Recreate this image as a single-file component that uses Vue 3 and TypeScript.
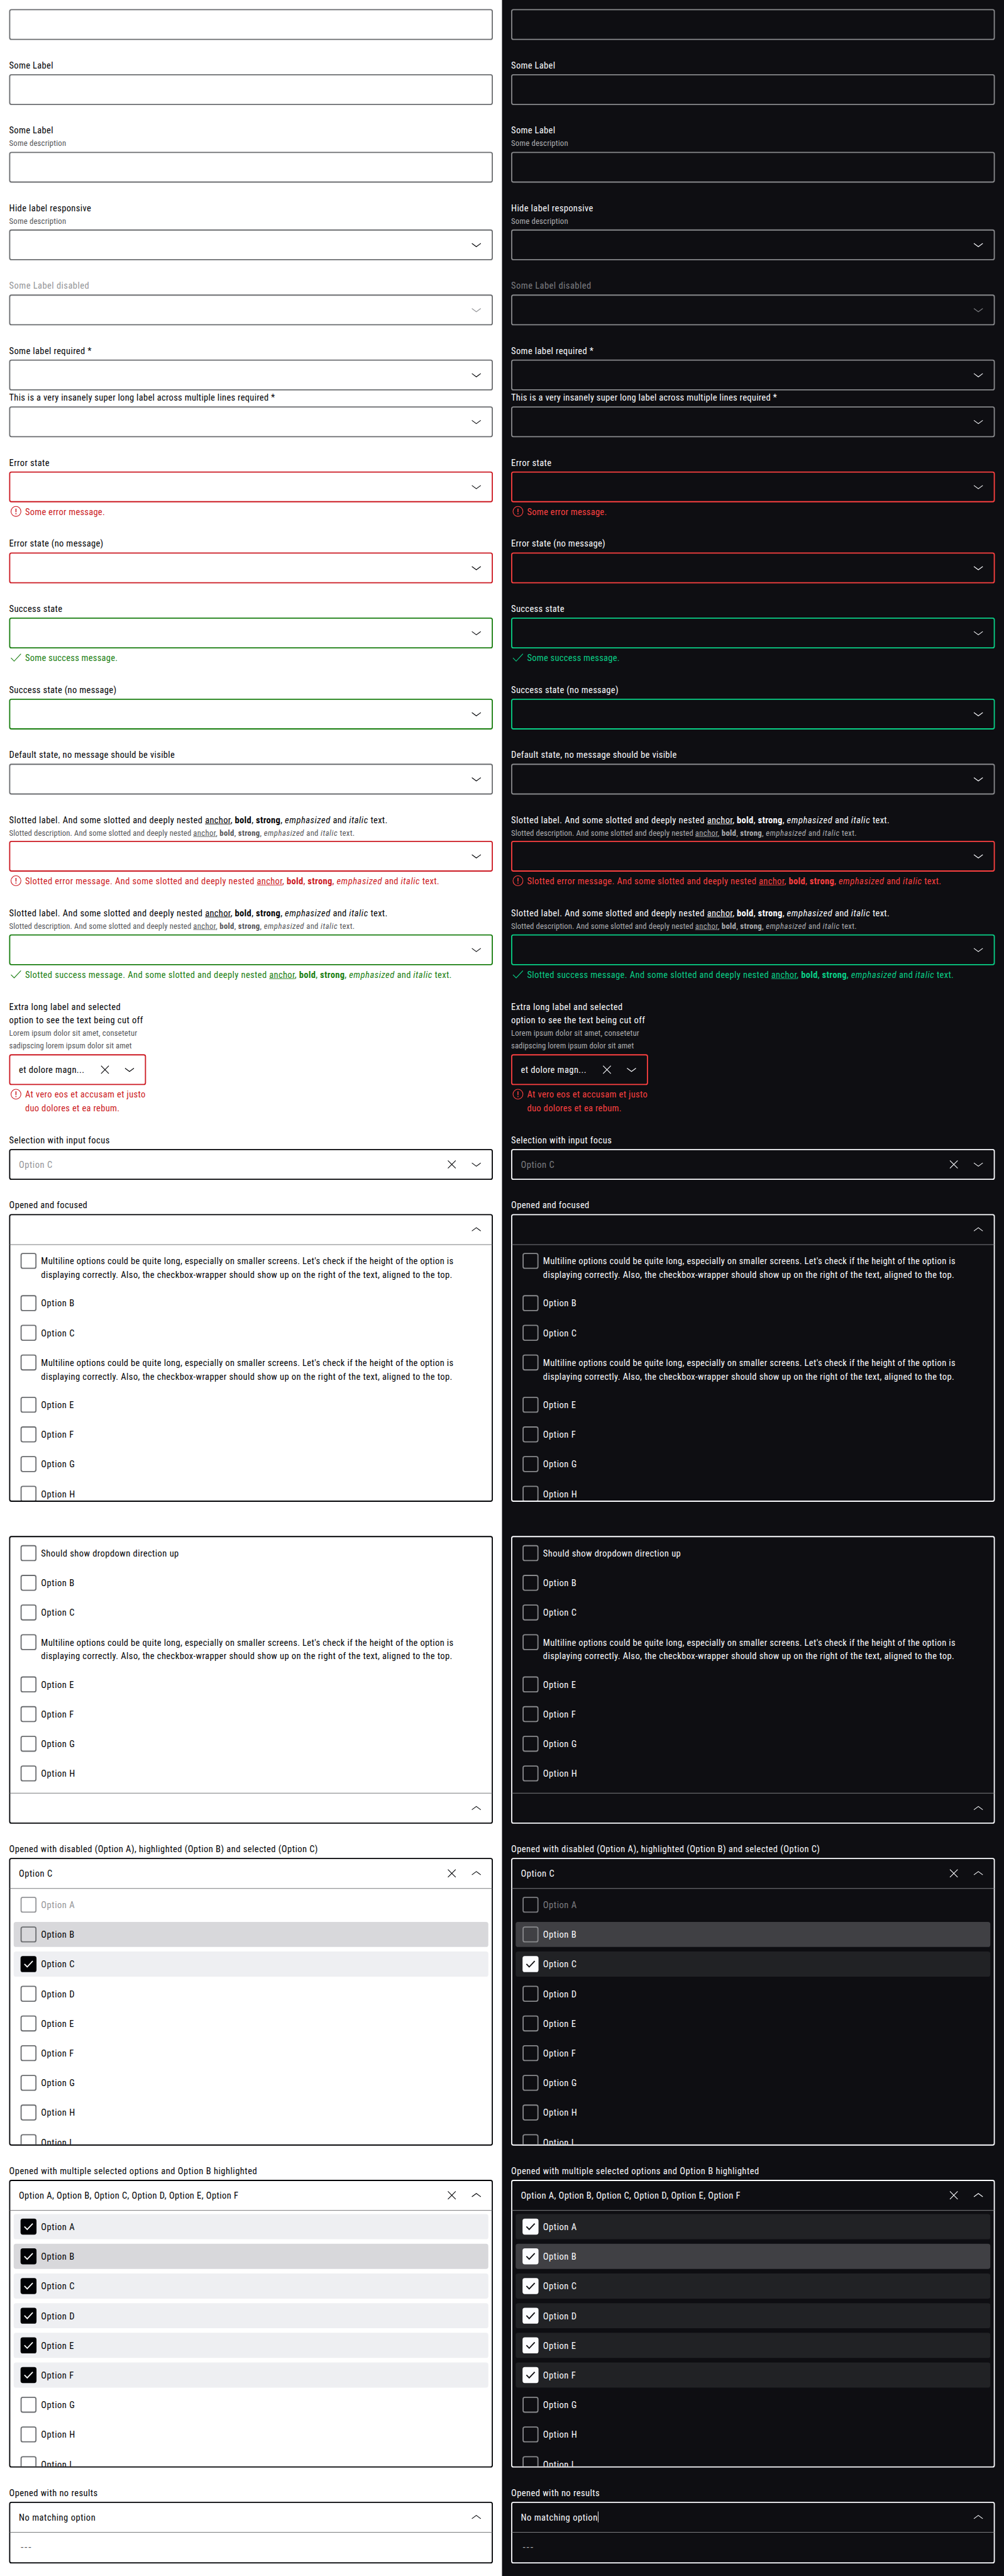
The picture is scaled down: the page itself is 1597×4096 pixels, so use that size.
<script setup lang="ts">
interface Copy {
  text: string
  track: number
  rich?: boolean
}
interface Option {
  lines: Copy[]
  checked?: boolean
  active?: boolean
  disabled?: boolean
}
interface Field {
  label?: Copy[]
  description?: Copy[]
  message?: Copy[]
  state?: 'error' | 'success'
  disabled?: boolean
  focused?: boolean
  toggle?: 'down' | 'up'
  clear?: boolean
  value?: Copy
  placeholder?: boolean
  caret?: boolean
  options?: Option[]
  empty?: boolean
  direction?: 'up'
  narrow?: boolean
  tight?: boolean
  unlabelled?: boolean
}

const c = (text: string, track = 0.42, rich = false): Copy => ({ text, track, rich })

const opt = (letter: string, extra: Partial<Option> = {}): Option => ({
  lines: [c('Option ' + letter, 0.6)],
  ...extra,
})
const multiline = (): Option => ({
  lines: [
    c("Multiline options could be quite long, especially on smaller screens. Let's check if the height of the option is", 0.402),
    c('displaying correctly. Also, the checkbox-wrapper should show up on the right of the text, aligned to the top.', 0.465),
  ],
})
const description = () => [c('Some description', 0.22)]
const slottedLabel = () => [c('Slotted label. And some slotted and deeply nested ', 0.473, true)]
const slottedDescription = () => [c('Slotted description. And some slotted and deeply nested ', 0.135, true)]

const fields: Field[] = [
  {},
  { label: [c('Some Label', 0.36)] },
  { label: [c('Some Label', 0.36)], description: description() },
  { label: [c('Hide label responsive')], description: description(), toggle: 'down' },
  { label: [c('Some Label disabled', 0.5)], toggle: 'down', disabled: true },
  { label: [c('Some label required *')], toggle: 'down' },
  {
    label: [c('This is a very insanely super long label across multiple lines required *', 0.325)],
    toggle: 'down',
    tight: true,
  },
  { label: [c('Error state', 0.46)], toggle: 'down', state: 'error', message: [c('Some error message.', 0.285)] },
  { label: [c('Error state (no message)', 0.37)], toggle: 'down', state: 'error' },
  { label: [c('Success state', 0.39)], toggle: 'down', state: 'success', message: [c('Some success message.', 0.285)] },
  { label: [c('Success state (no message)', 0.36)], toggle: 'down', state: 'success' },
  { label: [c('Default state, no message should be visible', 0.388)], toggle: 'down' },
  {
    label: slottedLabel(),
    description: slottedDescription(),
    toggle: 'down',
    state: 'error',
    message: [c('Slotted error message. And some slotted and deeply nested ', 0.447, true)],
  },
  {
    label: slottedLabel(),
    description: slottedDescription(),
    toggle: 'down',
    state: 'success',
    message: [c('Slotted success message. And some slotted and deeply nested ', 0.43, true)],
  },
  {
    label: [c('Extra long label and selected', 0.5), c('option to see the text being cut off', 0.49)],
    description: [c('Lorem ipsum dolor sit amet, consetetur', 0.205), c('sadipscing lorem ipsum dolor sit amet', 0.1)],
    value: c('et dolore magn...', 0.46),
    toggle: 'down',
    clear: true,
    state: 'error',
    narrow: true,
    message: [c('At vero eos et accusam et justo', 0.415), c('duo dolores et ea rebum.', 0.369)],
  },
  {
    label: [c('Selection with input focus', 0.51)],
    value: c('Option C', 0.63),
    placeholder: true,
    toggle: 'down',
    clear: true,
    focused: true,
  },
  {
    label: [c('Opened and focused')],
    toggle: 'up',
    focused: true,
    options: [multiline(), opt('B'), opt('C'), multiline(), opt('E'), opt('F'), opt('G'), opt('H')],
  },
  {
    toggle: 'up',
    focused: true,
    direction: 'up',
    unlabelled: true,
    options: [
      { lines: [c('Should show dropdown direction up', 0.5)] },
      opt('B'),
      opt('C'),
      multiline(),
      opt('E'),
      opt('F'),
      opt('G'),
      opt('H'),
    ],
  },
  {
    label: [c('Opened with disabled (Option A), highlighted (Option B) and selected (Option C)', 0.51)],
    value: c('Option C', 0.63),
    toggle: 'up',
    clear: true,
    focused: true,
    options: [
      opt('A', { disabled: true }),
      opt('B', { active: true }),
      opt('C', { checked: true }),
      ...['D', 'E', 'F', 'G', 'H', 'I'].map((l) => opt(l)),
    ],
  },
  {
    label: [c('Opened with multiple selected options and Option B highlighted', 0.566)],
    value: c('Option A, Option B, Option C, Option D, Option E, Option F', 0.48),
    toggle: 'up',
    clear: true,
    focused: true,
    options: [
      opt('A', { checked: true }),
      opt('B', { checked: true, active: true }),
      ...['C', 'D', 'E', 'F'].map((l) => opt(l, { checked: true })),
      ...['G', 'H', 'I'].map((l) => opt(l)),
    ],
  },
  {
    label: [c('Opened with no results', 0.496)],
    value: c('No matching option', 0.584),
    caret: true,
    toggle: 'up',
    focused: true,
    empty: true,
  },
]

const themes = ['light', 'dark'] as const
const spacing = (copy: Copy) => ({ letterSpacing: copy.track + 'px' })
</script>

<template>
  <div class="viewport">
    <div class="playground">
      <section v-for="theme in themes" :key="theme" class="theme" :class="theme">
        <div
          v-for="(field, i) in fields"
          :key="i"
          class="field"
          :class="[field.state, { narrow: field.narrow, tight: field.tight, unlabelled: field.unlabelled, disabled: field.disabled }]"
        >
          <div v-if="field.label" class="label">
            <div v-for="(line, n) in field.label" :key="n" class="line" :style="spacing(line)">{{ line.text
              }}<span v-if="line.rich" class="rich"><a>anchor</a>, <b>bold</b>, <strong>strong</strong>, <em>emphasized</em> and <i>italic</i> text.</span></div>
          </div>
          <div v-if="field.description" class="description">
            <div v-for="(line, n) in field.description" :key="n" class="line" :style="spacing(line)">{{ line.text
              }}<span v-if="line.rich" class="rich"><a>anchor</a>, <b>bold</b>, <strong>strong</strong>, <em>emphasized</em> and <i>italic</i> text.</span></div>
          </div>

          <div class="box" :class="{ focused: field.focused, open: field.options, drop: field.empty, upward: field.direction === 'up' }">
            <div class="control">
              <span class="value" :class="{ placeholder: field.placeholder }">
                <span v-if="field.value" class="line" :style="spacing(field.value)">{{ field.value.text }}</span>
                <span v-if="field.caret && theme === 'dark'" class="caret"></span>
              </span>
              <svg v-if="field.clear" class="icon" viewBox="0 0 24 24"><path d="M5.2 5.2 18.8 18.8M18.8 5.2 5.2 18.8" /></svg>
              <svg v-if="field.toggle === 'down'" class="icon chevron" viewBox="0 0 24 24"><path d="M4.2 9.4 12 15.2 19.8 9.4" /></svg>
              <svg v-if="field.toggle === 'up'" class="icon chevron" viewBox="0 0 24 24"><path d="M4.2 14.6 12 8.8 19.8 14.6" /></svg>
            </div>
            <div v-if="field.options || field.empty" class="list">
              <div
                v-for="(option, n) in field.options"
                :key="n"
                class="option"
                :class="{ checked: option.checked, active: option.active, off: option.disabled }"
              >
                <span class="checkbox">
                  <svg v-if="option.checked" viewBox="0 0 28 28"><path d="M6.8 13.8 11.7 18.9 21.4 8.6" /></svg>
                </span>
                <div class="text">
                  <div v-for="(line, m) in option.lines" :key="m" class="line" :style="spacing(line)">{{ line.text }}</div>
                </div>
              </div>
              <div v-if="field.empty" class="option none">---</div>
            </div>
          </div>

          <div v-if="field.message" class="message">
            <svg v-if="field.state === 'error'" class="icon" viewBox="0 0 24 24">
              <circle cx="12" cy="12" r="8.7" />
              <path class="bold-stroke" d="M12 7v6.4M12 15.2v1.8" />
            </svg>
            <svg v-else class="icon" viewBox="0 0 24 24"><path d="M3.3 12.6 8.8 18.3 20.7 5.4" /></svg>
            <div>
              <div v-for="(line, n) in field.message" :key="n" class="line" :style="spacing(line)">{{ line.text
                }}<span v-if="line.rich" class="rich"><a>anchor</a>, <b>bold</b>, <strong>strong</strong>, <em>emphasized</em> and <i>italic</i> text.</span></div>
            </div>
          </div>
        </div>
      </section>
    </div>
  </div>
</template>

<style>
body {
  margin: 0;
}
</style>

<style scoped>
.viewport {
  width: 1597px;
  height: 4096px;
  overflow: hidden;
}
.playground {
  display: flex;
  width: 1760px;
  height: 4513px;
  transform: scale(0.90739, 0.9076);
  transform-origin: 0 0;
  font-family: 'Roboto Condensed', Roboto, 'Liberation Sans', sans-serif;
  font-size: 16px;
  line-height: 24px;
}
.theme {
  box-sizing: border-box;
  width: 880px;
  padding: 16px;
  background: var(--bg);
  color: var(--primary);
}
.light {
  --bg: #fff;
  --primary: #010205;
  --surface: #eeeff2;
  --low: #d8d8db;
  --medium: #6b6d70;
  --high: #535457;
  --disabled: #949598;
  --error: #cc1922;
  --success: #197e10;
}
.dark {
  --bg: #0e0e12;
  --primary: #fbfcff;
  --surface: #212225;
  --low: #404044;
  --medium: #88898c;
  --high: #afb0b3;
  --disabled: #7c7d81;
  --error: #fc4040;
  --success: #09d087;
}
.field {
  --edge: var(--medium);
  margin-bottom: 32px;
}
.field:has(+ .tight) {
  margin-bottom: 0;
}
.unlabelled {
  padding-top: 28px;
}
.error {
  --edge: var(--error);
}
.success {
  --edge: var(--success);
}
.narrow {
  width: 240px;
}
.line {
  margin-bottom: -1px;
  padding-top: 1px;
  white-space: pre;
}
.label,
.description,
.message > div {
  display: flow-root;
  padding-bottom: 1px;
  margin-bottom: -1px;
}
.label > .line,
.description > .line,
.message .line {
  margin-bottom: -1px;
}
.label:has(+ .box),
.description:has(+ .box) {
  margin-bottom: 3px;
}
.description {
  color: var(--high);
  font-size: 14px;
  line-height: 21.8px;
}
.disabled .label,
.disabled .icon {
  color: var(--disabled);
}
.rich {
  letter-spacing: 0.36px;
}
.description .rich {
  letter-spacing: 0.38px;
}
.rich a {
  text-decoration: underline;
  text-decoration-thickness: 1px;
}
.rich em,
.rich i {
  letter-spacing: 0.62px;
}
.box {
  display: flex;
  flex-direction: column;
  box-sizing: border-box;
  height: 54px;
  border: 2px solid var(--edge);
  border-radius: 4px;
}
.box.focused {
  border-color: var(--primary);
}
.box.open {
  height: 504px;
}
.box.drop {
  height: 108px;
}
.box.upward {
  flex-direction: column-reverse;
}
.control {
  display: flex;
  flex: none;
  align-items: center;
  gap: 19px;
  box-sizing: border-box;
  height: 50px;
  padding: 0 15px;
}
.open .control,
.drop .control {
  height: 52px;
  margin: 0 -1px;
  padding: 0 16px 1px;
  border-bottom: 1px solid var(--medium);
}
.upward .control {
  padding: 1px 16px 0;
  border-top: 1px solid var(--medium);
  border-bottom: 0;
}
.value {
  display: flex;
  flex: 1;
  align-items: center;
  min-width: 0;
  white-space: pre;
}
.placeholder {
  color: var(--disabled);
}
.caret {
  width: 1px;
  height: 19px;
  background: var(--primary);
}
.icon {
  flex: none;
  width: 24px;
  height: 24px;
  fill: none;
  stroke: currentColor;
  stroke-width: 1.2;
}
.bold-stroke {
  stroke-width: 1.7;
}
.list {
  display: flex;
  flex: 1;
  flex-direction: column;
  gap: 8px;
  box-sizing: border-box;
  min-height: 0;
  padding: 6px;
  overflow: hidden;
}
.option {
  display: flex;
  flex: none;
  gap: 8px;
  height: 28px;
  padding: 8px 12px;
  border-radius: 4px;
}
.option:has(.line + .line) {
  height: 50px;
}
.option .text {
  padding: 2px 0;
}
.checkbox {
  box-sizing: border-box;
  flex: none;
  width: 28px;
  height: 28px;
  border: 2px solid var(--medium);
  border-radius: 4px;
}
.checkbox svg {
  display: block;
  width: 28px;
  height: 28px;
  margin: -2px;
  fill: none;
  stroke: var(--bg);
  stroke-width: 2;
}
.checked {
  background: var(--surface);
}
.checked .checkbox {
  border-color: var(--primary);
  background: var(--primary);
}
.active {
  background: var(--low);
}
.off {
  color: var(--disabled);
}
.off .checkbox {
  border-color: var(--disabled);
}
.none {
  color: var(--high);
  font-family: 'Liberation Sans', sans-serif;
  letter-spacing: 1.5px;
}
.message {
  display: flex;
  gap: 4px;
  margin-top: 4px;
  color: var(--edge);
}
.message > div {
  margin-bottom: 0;
  padding-bottom: 0;
}
.message .line:last-child {
  margin-bottom: -1px;
}
</style>
